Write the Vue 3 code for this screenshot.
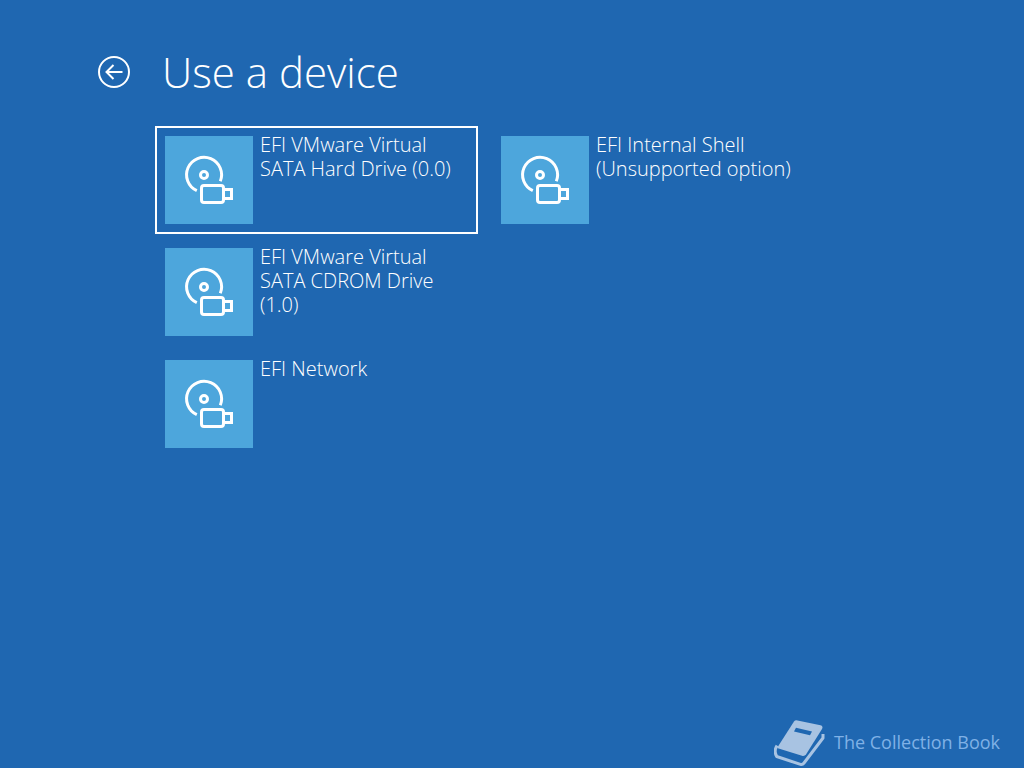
<script setup>
import { ref } from 'vue'

const devices = [
  'EFI VMware Virtual SATA Hard Drive (0.0)',
  'EFI VMware Virtual SATA CDROM Drive (1.0)',
  'EFI Network',
  'EFI Internal Shell (Unsupported option)'
]
const selected = ref(0)
</script>

<template>
  <div class="screen">
    <header class="head">
      <button class="back" type="button" aria-label="Back">
        <svg viewBox="0 0 32 32" width="32" height="32" fill="none" stroke="#fff" stroke-width="2">
          <circle cx="16" cy="16" r="15" />
          <path d="M24.5 16H9M15.5 9L8.5 16L15.5 23" />
        </svg>
      </button>
      <h1>Use a device</h1>
    </header>

    <main class="devices">
      <button
        v-for="(name, i) in devices"
        :key="name"
        type="button"
        class="device"
        :class="{ selected: selected === i }"
        @click="selected = i"
      >
        <svg class="tile" viewBox="0 0 88 88" width="88" height="88" fill="none" stroke="#fff" stroke-width="3" aria-hidden="true">
          <path d="M55.3 45.3A17.5 17.5 0 1 0 31.8 54.7" />
          <circle cx="39" cy="39" r="3.5" />
          <rect x="36.5" y="49.5" width="22" height="17" rx="2.5" />
          <path d="M58.5 53.5H66.5V62.5H58.5" />
        </svg>
        <span class="name">{{ name }}</span>
      </button>
    </main>

    <footer class="brand">
      <svg viewBox="0 0 52 48" width="52" height="48" aria-hidden="true">
        <path d="M20 1.5Q21 0 23.5 0.4L46.5 5.2Q49.5 6.2 48 9L32 34.5Q30.5 36.5 28 35.8L3 28Z" fill="#a8c3e2" />
        <path d="M3 25.5Q-0.5 31 2.7 36.5L26.5 44.4Q28.5 45 30 43L49 18V14" fill="none" stroke="#a8c3e2" stroke-width="3" stroke-linejoin="round" />
        <path d="M22 7.8L38 11.5L36 15.2L20 11.4Z" fill="#1f67b1" />
      </svg>
      <span>The Collection Book</span>
    </footer>
  </div>
</template>

<style>
body {
  margin: 0;
  background: #1f67b1;
}
</style>

<style scoped>
.screen {
  box-sizing: border-box;
  min-height: 100vh;
  display: flex;
  flex-direction: column;
  padding: 42px 24px 0 98px;
  background: #1f67b1;
  color: #fff;
  font-family: "Open Sans", "Noto Sans", sans-serif;
  font-weight: 300;
}
.head {
  display: flex;
  align-items: center;
  gap: 32px;
  height: 60px;
}
.back {
  width: 32px;
  height: 32px;
  padding: 0;
  border: 0;
  background: none;
}
.back svg {
  display: block;
}
h1 {
  margin: 0;
  font-size: 42px;
  line-height: 60px;
  font-weight: 300;
}
.devices {
  display: grid;
  grid-template-rows: repeat(3, 108px);
  grid-auto-flow: column;
  grid-auto-columns: 323px;
  gap: 4px 13px;
  margin: 24px 0 0 57px;
}
.device {
  display: flex;
  align-items: flex-start;
  gap: 7px;
  padding: 8px;
  border: 2px solid transparent;
  background: none;
  color: inherit;
  font: inherit;
  font-size: 20px;
  line-height: 24px;
  text-align: left;
}
.device.selected {
  border-color: #fff;
}
.tile {
  flex: none;
  background: #4da6dc;
}
.name {
  max-width: 200px;
  margin-top: -3px;
}
.brand {
  display: flex;
  align-items: flex-start;
  justify-content: flex-end;
  gap: 8px;
  margin-top: auto;
  color: #7fb1e6;
  font-size: 18px;
  font-weight: 400;
  line-height: 44px;
}
</style>
